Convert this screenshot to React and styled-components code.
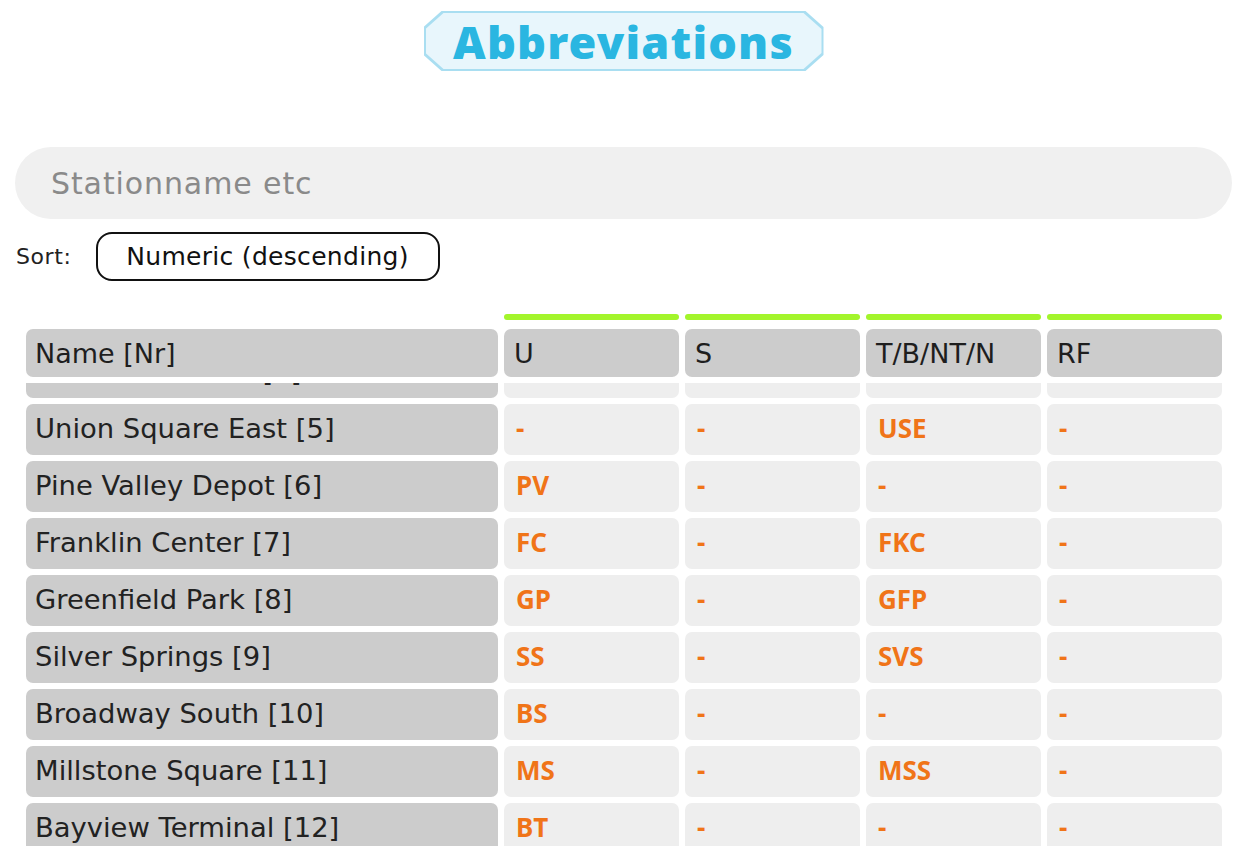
import React, { useLayoutEffect, useRef } from "react";
import styled, { createGlobalStyle } from "styled-components";

const Global = createGlobalStyle`
  html, body { margin: 0; padding: 0; background: #ffffff; overflow: hidden; }
  body { font-family: "DejaVu Sans", "Noto Sans", sans-serif; color: #222; }
  * { box-sizing: border-box; }
`;

const Page = styled.div`
  height: 100vh;
  display: flex;
  flex-direction: column;
  padding: 11px 14px 0 15px;
`;

const TitleWrap = styled.div`
  display: flex;
  justify-content: center;
  margin-bottom: 76px;
`;

const octagon = `polygon(18px 0, calc(100% - 18px) 0, 100% 16px, 100% calc(100% - 16px), calc(100% - 18px) 100%, 18px 100%, 0 calc(100% - 16px), 0 16px)`;

const TitleBorder = styled.div`
  width: 400px;
  height: 60px;
  padding: 2px;
  background: #a9def1;
  clip-path: ${octagon};
`;

const TitleInner = styled.h1`
  margin: 0;
  width: 100%;
  height: 100%;
  background: #e8f6fc;
  clip-path: ${octagon};
  display: flex;
  align-items: center;
  justify-content: center;
  font-family: "Noto Sans", sans-serif;
  font-weight: 900;
  font-size: 45px;
  letter-spacing: 1.2px;
  color: #2ab6e1;
`;

const Search = styled.input`
  width: 100%;
  height: 72px;
  border: none;
  outline: none;
  border-radius: 36px;
  background: #f0f0f0;
  padding: 0 36px;
  font-family: "DejaVu Sans", sans-serif;
  font-size: 30px;
  letter-spacing: 0.9px;
  color: #333;
  &::placeholder { color: #8a8a8a; }
`;

const SortRow = styled.div`
  display: flex;
  align-items: center;
  gap: 24px;
  margin-top: 13px;
  padding-left: 1px;
`;

const SortLabel = styled.span`
  font-size: 22px;
  letter-spacing: 0.6px;
  color: #222;
`;

const SortButton = styled.button`
  width: 344px;
  height: 49px;
  border: 2px solid #111;
  border-radius: 16px;
  background: #fff;
  font-family: "DejaVu Sans", sans-serif;
  font-size: 25px;
  letter-spacing: 0.3px;
  color: #111;
  padding: 0;
`;

const Table = styled.div`
  flex: 1;
  min-height: 0;
  display: flex;
  flex-direction: column;
  margin: 33px 10px 0 11px;
`;

const cols = "472px repeat(4, 1fr)";

const Grid = styled.div`
  display: grid;
  grid-template-columns: ${cols};
  column-gap: 6px;
`;

const Bar = styled.div`
  height: 6px;
  border-radius: 3px;
  background: ${(p) => (p.$on ? "#a3f52b" : "transparent")};
  margin-bottom: 9px;
`;

const HeadCell = styled.div`
  height: 48px;
  border-radius: 7px;
  background: #cccccc;
  display: flex;
  align-items: center;
  padding-left: ${(p) => (p.$name ? "9px" : "10px")};
  font-size: 27px;
  color: #1e1e1e;
`;

const Body = styled.div`
  flex: 1;
  min-height: 0;
  overflow: hidden;
  margin-top: 6px;
`;

const Rows = styled.div`
  display: flex;
  flex-direction: column;
  gap: 6px;
`;

const Cell = styled.div`
  height: 51px;
  border-radius: 7px;
  background: ${(p) => (p.$name ? "#cccccc" : "#eeeeee")};
  display: flex;
  align-items: center;
  padding-left: ${(p) => (p.$name ? "9px" : "12px")};
  padding-bottom: ${(p) => (p.$name ? "2px" : "3px")};
  font-family: ${(p) => (p.$name ? '"DejaVu Sans", sans-serif' : '"Noto Sans", sans-serif')};
  font-size: ${(p) => (p.$name ? "27.4px" : "26px")};
  font-weight: ${(p) => (p.$name ? 400 : 700)};
  color: ${(p) => (p.$name ? "#222" : "#f07418")};
  white-space: nowrap;
`;

const rows = [
  ["Harbor Point", 1, "HP", "-", "HPT", "-"],
  ["Oakwood Lane", 2, "OL", "-", "-", "-"],
  ["Riverbend Plaza", 3, "RP", "-", "RBP", "-"],
  ["Cedar Hill North", 4, "-", "-", "CHN", "-"],
  ["Union Square East", 5, "-", "-", "USE", "-"],
  ["Pine Valley Depot", 6, "PV", "-", "-", "-"],
  ["Franklin Center", 7, "FC", "-", "FKC", "-"],
  ["Greenfield Park", 8, "GP", "-", "GFP", "-"],
  ["Silver Springs", 9, "SS", "-", "SVS", "-"],
  ["Broadway South", 10, "BS", "-", "-", "-"],
  ["Millstone Square", 11, "MS", "-", "MSS", "-"],
  ["Bayview Terminal", 12, "BT", "-", "-", "-"],
  ["Lakeside Junction", 13, "LJ", "-", "LSJ", "-"],
  ["Westgate Station", 14, "WS", "-", "-", "-"],
];

export default function App() {
  const bodyRef = useRef(null);
  useLayoutEffect(() => {
    if (bodyRef.current) bodyRef.current.scrollTop = 3 * 57 + 36;
  }, []);
  return (
    <>
      <Global />
      <Page>
        <TitleWrap>
          <TitleBorder>
            <TitleInner>Abbreviations</TitleInner>
          </TitleBorder>
        </TitleWrap>
        <Search placeholder="Stationname etc" />
        <SortRow>
          <SortLabel>Sort:</SortLabel>
          <SortButton>Numeric (descending)</SortButton>
        </SortRow>
        <Table>
          <Grid>
            <Bar />
            <Bar $on />
            <Bar $on />
            <Bar $on />
            <Bar $on />
            <HeadCell $name>Name [Nr]</HeadCell>
            <HeadCell>U</HeadCell>
            <HeadCell>S</HeadCell>
            <HeadCell>T/B/NT/N</HeadCell>
            <HeadCell>RF</HeadCell>
          </Grid>
          <Body ref={bodyRef}>
            <Rows>
              {rows.map(([name, nr, u, s, t, rf]) => (
                <Grid key={nr}>
                  <Cell $name>
                    {name} [{nr}]
                  </Cell>
                  <Cell>{u}</Cell>
                  <Cell>{s}</Cell>
                  <Cell>{t}</Cell>
                  <Cell>{rf}</Cell>
                </Grid>
              ))}
            </Rows>
          </Body>
        </Table>
      </Page>
    </>
  );
}
